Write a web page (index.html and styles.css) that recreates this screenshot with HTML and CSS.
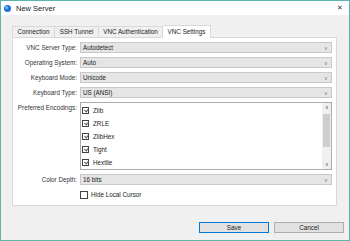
FILE: index.html
```html
<!DOCTYPE html>
<html lang="en">

<head>
  <meta charset="UTF-8">
  <meta name="viewport" content="width=device-width, initial-scale=1.0">
  <link rel="stylesheet" href="styles.css">
  <title>New Server</title>
</head>

<body>
  <div class="window">
    <div class="titlebar">
      <svg class="appIcon" width="7" height="7" viewBox="0 0 7 7">
        <circle cx="3.5" cy="3.5" r="3.5" fill="#1a73d9" />
        <circle cx="2.6" cy="2.5" r="1.6" fill="#6fb2f2" />
      </svg>
      <span class="title">New Server</span>
      <span class="close">&#x2715;</span>
    </div>

    <div class="body">
      <div class="tabs">
        <div class="tab tabConn">Connection</div>
        <div class="tab tabSsh">SSH Tunnel</div>
        <div class="tab tabAuth">VNC Authentication</div>
        <div class="tab active">VNC Settings</div>
      </div>

      <div class="panel">
        <div class="form">
          <label class="label">VNC Server Type:</label>
          <div class="combo"><span>Autodetect</span><span class="arrow">&#x2228;</span></div>

          <label class="label">Operating System:</label>
          <div class="combo"><span>Auto</span><span class="arrow">&#x2228;</span></div>

          <label class="label">Keyboard Mode:</label>
          <div class="combo"><span>Unicode</span><span class="arrow">&#x2228;</span></div>

          <label class="label">Keyboard Type:</label>
          <div class="combo"><span>US (ANSI)</span><span class="arrow">&#x2228;</span></div>

          <label class="label">Preferred Encodings:</label>
          <div class="listbox">
            <div class="items">
              <div class="item"><span class="check on"></span>Zlib</div>
              <div class="item"><span class="check on"></span>ZRLE</div>
              <div class="item"><span class="check on"></span>ZlibHex</div>
              <div class="item"><span class="check on"></span>Tight</div>
              <div class="item"><span class="check on"></span>Hextile</div>
              <div class="item"><span class="check"></span></div>
            </div>
            <div class="scrollbar">
              <div class="scrollBtn">&#x2227;</div>
              <div class="track"><div class="thumb"></div></div>
              <div class="scrollBtn">&#x2228;</div>
            </div>
          </div>

          <label class="label">Color Depth:</label>
          <div class="combo"><span>16 bits</span><span class="arrow">&#x2228;</span></div>

          <span></span>
          <div class="item cursorRow"><span class="check"></span>Hide Local Cursor</div>
        </div>
      </div>

      <div class="buttons">
        <button class="btn default">Save</button>
        <button class="btn">Cancel</button>
      </div>
    </div>
  </div>
</body>

</html>
```

FILE: styles.css
```css
body {
  margin: 0;
  font-family: "Liberation Sans", Arial, sans-serif;
  font-size: 6.3px;
  color: #1a1a1a;
}

.window {
  width: 350px;
  height: 241px;
  box-sizing: border-box;
  border: 1px solid #5cb5ad;
  background-color: #f0f0f0;
  display: flex;
  flex-direction: column;
}

.titlebar {
  height: 14px;
  background-color: #fff;
  display: flex;
  align-items: center;
  padding-left: 3px;
  padding-right: 6px;
}

.appIcon {
  margin-right: 5px;
}

.title {
  font-size: 7.5px;
  flex: 1;
}

.close {
  font-size: 7px;
  color: #333;
}

.body {
  padding: 10px 0 0 11px;
}

.tabs {
  display: flex;
  align-items: flex-end;
  height: 12px;
}

.tab {
  height: 11px;
  box-sizing: border-box;
  border: 1px solid #d9d9d9;
  border-bottom: none;
  border-right: none;
  background-color: #f0f0f0;
  text-align: center;
  line-height: 10px;
}

.tabConn {
  width: 42px;
}

.tabSsh {
  width: 44px;
}

.tabAuth {
  width: 65px;
  border-right: 1px solid #d9d9d9;
}

.tab.active {
  width: 48px;
  height: 13px;
  margin-bottom: -1px;
  background-color: #fff;
  border-right: 1px solid #d9d9d9;
  border-left: none;
  line-height: 11px;
}

.panel {
  width: 325px;
  height: 169px;
  box-sizing: border-box;
  background-color: #fff;
  border: 1px solid #d9d9d9;
  padding-top: 4px;
}

.form {
  display: grid;
  grid-template-columns: 64px 252px;
  column-gap: 3px;
  row-gap: 4px;
}

.label {
  text-align: right;
  line-height: 11px;
  white-space: nowrap;
  color: #333;
}

.combo {
  height: 11px;
  box-sizing: border-box;
  background-color: #e5e5e5;
  border: 1px solid #c9c9c9;
  display: flex;
  justify-content: space-between;
  align-items: center;
  padding: 0 3px 0 2px;
}

.arrow {
  font-size: 5px;
  color: #777;
}

.listbox {
  height: 68px;
  box-sizing: border-box;
  border: 1px solid #acacac;
  display: flex;
  overflow: hidden;
}

.items {
  flex: 1;
  padding: 1px 0 0 1px;
}

.item {
  height: 13px;
  display: flex;
  align-items: center;
}

.check {
  width: 7px;
  height: 7px;
  box-sizing: border-box;
  border: 1px solid #444;
  background-color: #fff;
  margin-right: 4px;
  position: relative;
}

.check.on::after {
  content: "";
  position: absolute;
  left: 1.5px;
  top: 0;
  width: 2px;
  height: 3px;
  border-right: 1px solid #555;
  border-bottom: 1px solid #555;
  transform: rotate(40deg);
}

.scrollbar {
  width: 9px;
  background-color: #f0f0f0;
  display: flex;
  flex-direction: column;
}

.scrollBtn {
  height: 9px;
  font-size: 5px;
  color: #555;
  text-align: center;
  line-height: 9px;
}

.track {
  flex: 1;
  padding: 2px 1px 0;
}

.thumb {
  height: 33px;
  background-color: #cdcdcd;
}

.cursorRow {
  height: 9px;
  margin-top: 1px;
}

.cursorRow .check {
  width: 8px;
  height: 8px;
  margin-right: 3px;
}

.buttons {
  display: flex;
  gap: 5px;
  justify-content: flex-end;
  padding-right: 5px;
  margin-top: 16px;
}

.btn {
  width: 70px;
  height: 11px;
  box-sizing: border-box;
  background-color: #e1e1e1;
  border: 1px solid #adadad;
  font-family: inherit;
  font-size: 6.3px;
  color: #1a1a1a;
  padding: 0;
  line-height: 9px;
}

.btn.default {
  border-color: #0078d7;
}
```
